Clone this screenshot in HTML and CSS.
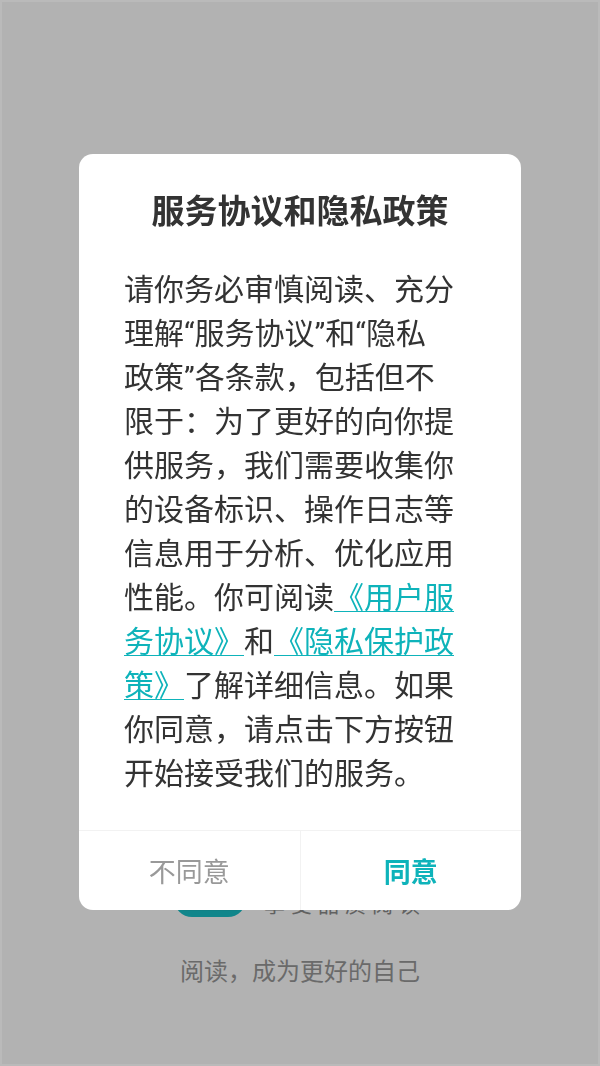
FILE: index.html
```html
<!DOCTYPE html>
<html lang="zh-CN">
<head>
    <meta charset="UTF-8">
    <meta name="viewport" content="width=device-width, initial-scale=1">
    <title>服务协议和隐私政策</title>
    <link rel="stylesheet" href="styles.css">
</head>
<body>
<div class="splash">
    <div class="brand">
        <svg class="brand-logo" viewBox="0 0 72 72" aria-hidden="true">
            <rect width="72" height="72" rx="18" fill="#18c0c8"/>
            <path d="M8 14h56v50q0 2-2 2H10q-2 0-2-2z" fill="#1ab9bf"/>
        </svg>
        <span class="brand-slogan">享受品质阅读</span>
    </div>
    <p class="splash-text">阅读，成为更好的自己</p>
</div>
<div class="overlay">
    <div class="dialog" role="dialog" aria-modal="true" aria-labelledby="dialogTitle">
        <h1 class="dialog-title" id="dialogTitle">服务协议和隐私政策</h1>
        <p class="dialog-text">请你务必审慎阅读、充分理解“服务协议”和“隐私政策”各条款，包括但不限于：为了更好的向你提供服务，我们需要收集你的设备标识、操作日志等信息用于分析、优化应用性能。你可阅读<a href="#">《用户服务协议》</a>和<a href="#">《隐私保护政策》</a>了解详细信息。如果你同意，请点击下方按钮开始接受我们的服务。</p>
        <div class="dialog-buttons">
            <button class="btn" type="button">不同意</button>
            <button class="btn btn-agree" type="button">同意</button>
        </div>
    </div>
</div>
</body>
</html>
```
FILE: styles.css
```css
* {
    box-sizing: border-box;
}
body {
    margin: 0;
    font-family: Roboto, "Noto Sans CJK SC", sans-serif;
    color: #333;
    background: #fff;
}
.splash {
    min-height: 100vh;
    display: flex;
    flex-direction: column;
    justify-content: flex-end;
    align-items: center;
    padding-bottom: 76px;
}
.brand {
    display: flex;
    align-items: flex-end;
    gap: 18px;
    margin-bottom: 37px;
}
.brand-logo {
    width: 72px;
    height: 72px;
}
.brand-slogan {
    font-size: 21px;
    line-height: 24px;
    letter-spacing: 6px;
    color: #8c8c8c;
}
.splash-text {
    margin: 0;
    font-size: 24px;
    line-height: 36px;
    color: #999;
}

.overlay {
    position: fixed;
    inset: 0;
    display: flex;
    align-items: center;
    padding: 0 77px 2px;
    border: 2px solid rgba(255, 255, 255, 0.1);
    background: rgba(0, 0, 0, 0.3);
}
.dialog {
    width: 100%;
    background: #fff;
    border-radius: 14px;
    overflow: hidden;
}
.dialog-title {
    margin: 34px 0 32px;
    font-size: 33px;
    line-height: 48px;
    text-align: center;
}
.dialog-text {
    margin: 0;
    padding: 0 66px 34px 45px;
    font-size: 30px;
    line-height: 44px;
}
.dialog-text a {
    color: #0eb3ba;
    text-decoration-thickness: 1px;
    text-decoration-skip-ink: none;
    text-underline-offset: 3px;
}
.dialog-buttons {
    display: flex;
    border-top: 1px solid #f2f2f2;
}
.btn {
    flex: 1;
    height: 79px;
    border: 0;
    padding: 0;
    background: none;
    font-family: inherit;
    font-size: 27px;
    color: #999;
}
.btn-agree {
    border-left: 1px solid #f2f2f2;
    font-weight: 700;
    color: #0eb3ba;
}
```
